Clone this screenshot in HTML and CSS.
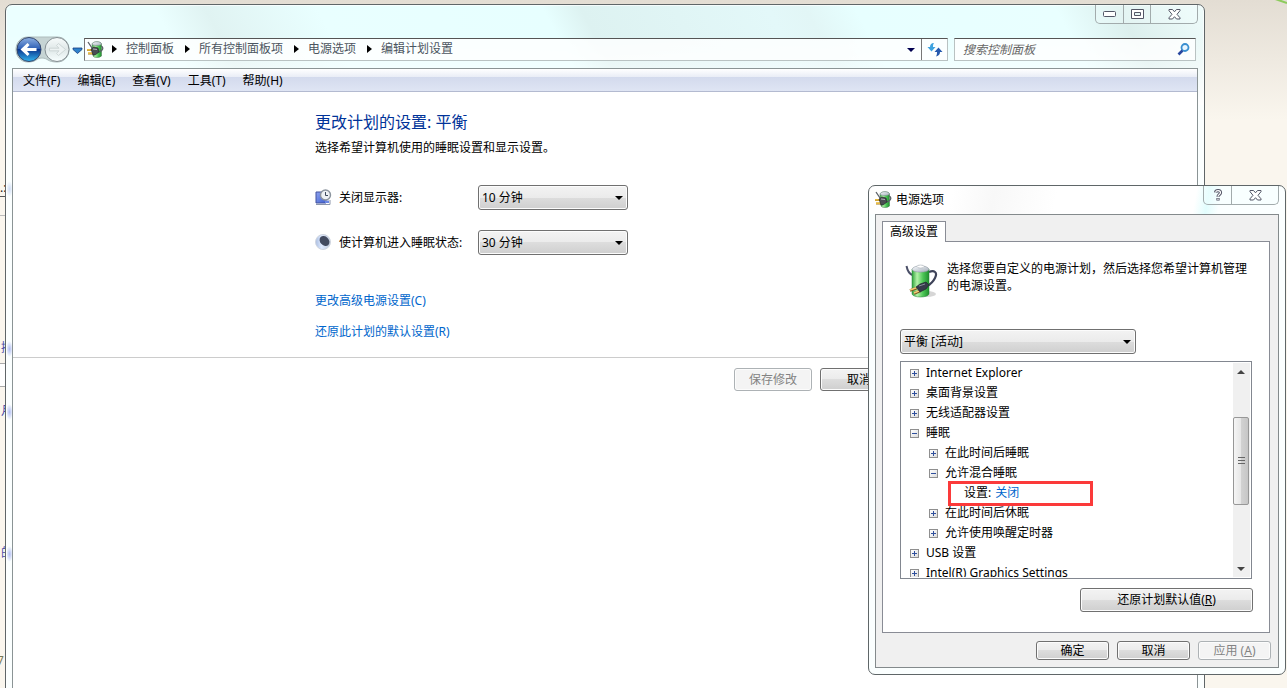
FILE: index.html
```html
<!DOCTYPE html>
<html lang="zh-CN">
<head>
<meta charset="utf-8">
<title>编辑计划设置</title>
<link rel="stylesheet" href="styles.css">
</head>
<body class="desktop">
<svg class="defs" width="0" height="0" aria-hidden="true">
  <defs>
    <linearGradient id="cell" x1="0" x2="1" y1="0" y2="0"><stop offset="0" stop-color="#2fa33c"/><stop offset=".3" stop-color="#b4f2a8"/><stop offset=".65" stop-color="#4cc656"/><stop offset="1" stop-color="#1f8f2e"/></linearGradient>
    <linearGradient id="cap" x1="0" x2="1" y1="0" y2="1"><stop offset="0" stop-color="#fafcff"/><stop offset="1" stop-color="#a3adb8"/></linearGradient>
    <linearGradient id="ball" x1="0" x2="0" y1="0" y2="1"><stop offset="0" stop-color="#8eb0e2"/><stop offset=".48" stop-color="#2c5db4"/><stop offset=".5" stop-color="#0c378f"/><stop offset="1" stop-color="#33b5ef"/></linearGradient>
    <linearGradient id="pale" x1="0" x2="0" y1="0" y2="1"><stop offset="0" stop-color="#f7fbfb"/><stop offset=".5" stop-color="#dfe8e8"/><stop offset="1" stop-color="#f8ffff"/></linearGradient>
    <linearGradient id="screen" x1="0" x2="1" y1="0" y2="1"><stop offset="0" stop-color="#8ea3f0"/><stop offset="1" stop-color="#3f60d0"/></linearGradient>
    <linearGradient id="moon" x1="0" x2="1" y1="0" y2="0"><stop offset="0" stop-color="#a9bde0"/><stop offset=".4" stop-color="#dfeaff"/><stop offset="1" stop-color="#c0cadb"/></linearGradient>
    <symbol id="power" viewBox="0 0 34 36">
      <ellipse cx="22" cy="31" rx="9" ry="3" fill="#777" opacity=".3"/>
      <path d="M1.500 3c1 5 3 8 6 9" fill="none" stroke="#4b5068" stroke-width="2"/>
      <path d="M24 9c5-2 9 0 6 6-2 4-4 6-8 8" fill="none" stroke="#3e4359" stroke-width="2.200"/>
      <path d="M7 6v25c1 4 16 4 17 0V6z" fill="url(#cell)" stroke="#27843a" stroke-width=".5"/>
      <path d="M7 6.500c1-5 16-5 17 0-1 3.500-16 3.500-17 0z" fill="url(#cap)" stroke="#89939c" stroke-width=".5"/>
      <ellipse cx="15.500" cy="3.500" rx="3.500" ry="1.500" fill="#fff" stroke="#9aa3ab" stroke-width=".5"/>
      <path d="M5 27.500l7-2.500M9 30.500l6-2.500" stroke="#7c5420" stroke-width="2.600"/>
      <path d="M5 27l7-2.500M9 30l6-2.500" stroke="#f3cd77" stroke-width="1.400"/>
      <path d="M11 24l4-3 6-2 3 3-3 4-6 3z" fill="#363a4a" stroke="#191c27" stroke-width=".6"/>
      <path d="M14 23l6-2" stroke="#838999"/>
    </symbol>
    <symbol id="power-small" viewBox="0 0 17 17">
      <path d="M5 3c1-3 9-3 9.500 0v12c-2 2-7.500 2-8.500 0z" fill="url(#cell)" stroke="#477350" stroke-width=".5"/>
      <path d="M5 3c1-3 9-3 9.500 0-1 2-8.500 2-9.500 0z" fill="url(#cap)" stroke="#788" stroke-width=".5"/>
      <path d="M1 1l4 6M14 5c3 1 2 5-2 6" fill="none" stroke="#5a6066" stroke-width="1.300"/>
      <path d="M0 9h5M1 12.500h5" stroke="#a07a1c" stroke-width="2"/>
      <path d="M0 8.800h5M1 12.200h5" stroke="#ffd04d" stroke-width="1.200"/>
      <path d="M4 8l3-2 4 1 1 4-4 3H6z" fill="#4a4d52" stroke="#1b1d21" stroke-width=".6"/>
      <path d="M6 8l4 .5" stroke="#b0b4ba"/>
    </symbol>
    <symbol id="x-mark" viewBox="0 0 13 11">
      <path d="M1 .5h3.500l2 2.300 2-2.300H12v1.200L9 5.300l3 3.500V10H8.500l-2-2.300-2 2.300H1V8.800l3-3.500-3-3.600z" fill="#fff" stroke="#535666"/>
    </symbol>
  </defs>
</svg>

<div class="backdrop" aria-hidden="true">
  <span class="rule rule-dark"></span><span class="rule rule-light"></span><span class="strip"></span>
  <span class="bit bit-dots">.:</span><span class="bit bit-a">接</span><span class="bit bit-b">月</span><span class="bit bit-c">的</span><span class="bit bit-d">7</span>
  <svg class="leaf" width="12" height="5" viewBox="0 0 12 5"><path d="M0-1l12 4" stroke="#8ccb5c" stroke-width="2" fill="none"/></svg>
</div>

<main class="window">
  <header class="titlebar">
    <div class="caption">
      <button class="cap" aria-label="最小化"><svg width="13" height="6" viewBox="0 0 13 6"><rect x=".5" y=".5" width="12" height="5" rx="1" fill="#fff" stroke="#535666"/></svg></button>
      <button class="cap" aria-label="最大化"><svg width="13" height="11" viewBox="0 0 13 11"><path d="M.5.5h12v9H.5zM3.500 3.500h6v3h-6z" fill="#fff" stroke="#535666" fill-rule="evenodd"/></svg></button>
      <button class="cap cap-wide" aria-label="关闭"><svg width="13" height="11"><use href="#x-mark"/></svg></button>
    </div>
  </header>
  <nav class="navbar">
    <button class="travel" aria-label="后退和前进">
      <svg width="68" height="28" viewBox="0 0 68 28">
        <path d="M13 1h29c16 0 16 25 0 25-10 0-9-4-15-4s-5 4-14 4C-3 26-3 1 13 1z" fill="#c6d4d4" stroke="#aebcbc"/>
        <circle cx="14" cy="13.500" r="12" fill="url(#ball)" stroke="#34466c"/>
        <path d="M5.500 13.500l7-6.500 2 2-2.500 3h9.500v3H12l2.500 3-2 2z" fill="#fff"/>
        <circle cx="42" cy="13.500" r="12" fill="url(#pale)" stroke="#848e92"/>
        <path d="M50.500 13.500l-7-6-2 2 2.500 2.700h-9.500v2.600H44l-2.500 2.700 2 2z" fill="#edf3f3" stroke="#c7d0d1" stroke-width=".8"/>
        <path d="M58 12h9v1.500L62.500 17.500 58 13.500z" fill="#2e82cc" stroke="#173c80" stroke-width=".8"/>
      </svg>
    </button>
    <div class="address">
      <svg class="address-icon" width="17" height="17"><use href="#power-small"/></svg>
      <ol class="crumbs">
        <li><a href="#">控制面板</a></li><li><a href="#">所有控制面板项</a></li><li><a href="#">电源选项</a></li><li><a href="#">编辑计划设置</a></li>
      </ol>
      <button class="history" aria-label="以前的位置"><span class="tri"></span></button>
      <button class="refresh" aria-label="刷新"><svg width="16" height="15" viewBox="0 0 16 15"><path d="M7 1C4 1 3 3 3 5H.5l4 4.500L8.500 5H6c0-1.500 0-2.500 1-4z" fill="#3da2df"/><path d="M9 14.500c3-.5 4-2.500 4-4.500h2.500l-4-4.500L7.500 10H10c0 2-.2 3-1 4.500z" fill="#2559ae"/></svg></button>
    </div>
    <label class="search">
      <input type="search" placeholder="搜索控制面板" aria-label="搜索控制面板">
      <svg width="13" height="13" viewBox="0 0 13 13"><circle cx="8" cy="4.500" r="3.500" fill="#e8f6ff" stroke="#3a8fd0" stroke-width="1.800"/><path d="M5.500 7.500L1.500 11.500" stroke="#29479f" stroke-width="2.600"/></svg>
    </label>
  </nav>
  <div class="client">
    <div class="menubar"><button>文件(F)</button><button>编辑(E)</button><button>查看(V)</button><button>工具(T)</button><button>帮助(H)</button></div>
    <section class="plan">
      <h1>更改计划的设置: 平衡</h1>
      <p>选择希望计算机使用的睡眠设置和显示设置。</p>
      <div class="fields">
        <svg width="17" height="17" viewBox="0 0 17 17"><path d="M1 3h10v11H1z" fill="url(#screen)" stroke="#43539e"/><path d="M1 15.500h14V11" fill="none" stroke="#8c96ac"/><path d="M10 11.500h4V14h-4z" fill="#6d88e4"/><circle cx="10.500" cy="6" r="5" fill="#eef2f5" stroke="#8b949e" stroke-width="1.400"/><path d="M10.500 3v3.500h2.500" fill="none" stroke="#3d4a5c"/></svg>
        <label for="display">关闭显示器:</label>
        <span class="combo"><select id="display"><option>10 分钟</option></select></span>
        <svg width="17" height="17" viewBox="0 0 17 17"><circle cx="8" cy="8" r="7.500" fill="url(#moon)" stroke="#d0d6e0"/><ellipse cx="9.500" cy="7" rx="5.500" ry="4.300" transform="rotate(45 9.500 7)" fill="#434b60"/></svg>
        <label for="sleep">使计算机进入睡眠状态:</label>
        <span class="combo"><select id="sleep"><option>30 分钟</option></select></span>
      </div>
      <div class="links"><a href="#">更改高级电源设置(C)</a><a href="#">还原此计划的默认设置(R)</a></div>
    </section>
    <footer class="plan-actions"><button class="btn" disabled>保存修改</button><button class="btn">取消</button></footer>
  </div>
</main>

<section class="dialog" role="dialog" aria-labelledby="dialog-title">
  <header class="dialog-title">
    <svg width="17" height="17"><use href="#power-small"/></svg>
    <h2 id="dialog-title">电源选项</h2>
    <div class="caption">
      <button class="cap" aria-label="帮助"><svg width="10" height="12" viewBox="0 0 10 12"><path d="M2.500 3.500C3 1 7.500 1 7.500 3.800 7.500 5.500 5 5.500 5 7.800M5 9v2.500" fill="none" stroke="#535666" stroke-width="3.200"/><path d="M2.500 3.500C3 1 7.500 1 7.500 3.800 7.500 5.500 5 5.500 5 7.500M5 9.500v1.500" fill="none" stroke="#fff" stroke-width="1.200"/></svg></button>
      <button class="cap cap-wide" aria-label="关闭"><svg width="13" height="11"><use href="#x-mark"/></svg></button>
    </div>
  </header>
  <div class="dialog-client">
    <div role="tablist"><button class="tab" role="tab" aria-selected="true">高级设置</button></div>
    <div class="page" role="tabpanel">
      <div class="intro"><svg width="34" height="36"><use href="#power"/></svg><p>选择您要自定义的电源计划，然后选择您希望计算机管理的电源设置。</p></div>
      <span class="combo combo-plan"><select aria-label="电源计划"><option>平衡 [活动]</option></select></span>
      <div class="listbox">
        <ul class="tree">
          <li><button class="knob" aria-label="展开"></button>Internet Explorer</li>
          <li><button class="knob" aria-label="展开"></button>桌面背景设置</li>
          <li><button class="knob" aria-label="展开"></button>无线适配器设置</li>
          <li><button class="knob open" aria-label="折叠"></button>睡眠</li>
          <li class="sub"><button class="knob" aria-label="展开"></button>在此时间后睡眠</li>
          <li class="sub"><button class="knob open" aria-label="折叠"></button>允许混合睡眠</li>
          <li class="leaf-row"><span class="marker"></span>设置: <a href="#">关闭</a></li>
          <li class="sub"><button class="knob" aria-label="展开"></button>在此时间后休眠</li>
          <li class="sub"><button class="knob" aria-label="展开"></button>允许使用唤醒定时器</li>
          <li><button class="knob" aria-label="展开"></button>USB 设置</li>
          <li><button class="knob" aria-label="展开"></button>Intel(R) Graphics Settings</li>
        </ul>
        <div class="scrollbar"><button class="step" aria-label="向上"><span class="tri tri-up"></span></button><div class="track"><div class="thumb"></div></div><button class="step" aria-label="向下"><span class="tri"></span></button></div>
      </div>
      <button class="btn restore">还原计划默认值(<u>R</u>)</button>
    </div>
    <footer class="dialog-actions"><button class="btn">确定</button><button class="btn">取消</button><button class="btn" disabled>应用 (<u>A</u>)</button></footer>
  </div>
</section>
</body>
</html>
```

FILE: styles.css
```css
* { box-sizing: border-box; }
body, h1, h2, p, ul, ol { margin: 0; padding: 0; }
ul, ol { list-style: none; }
button, input, select { font: inherit; color: inherit; }
button { padding: 0; border: 0; background: none; white-space: nowrap; }
svg { display: block; flex: none; }
a { color: #0066cc; text-decoration: none; }
.defs { position: absolute; }

.desktop {
  position: relative;
  height: 100vh;
  overflow: hidden;
  font: 12px/16px "Noto Sans", "Noto Sans CJK SC", sans-serif;
  color: #000;
  background: #faf6ee linear-gradient(#e3ddd3, #faf6ee) 0 0 / 100% 120px no-repeat;
}

/* slivers of the page behind the windows */
.backdrop > * { position: absolute; }
.rule { left: 0; width: 6px; height: 1px; }
.rule-dark { top: 196px; background: #555; }
.rule-light { top: 215px; background: #bbb; }
.strip { left: 0; top: 363px; width: 6px; height: 24px; background: #fff; border: solid #aaa; border-width: 1px 0; }
.bit { left: 1px; color: #4a4aa8; }
.bit-dots { left: 0; top: 180px; color: #222; }
.bit-a { top: 340px; }
.bit-b { top: 403px; }
.bit-c { top: 545px; }
.bit-d { left: -3px; top: 653px; color: #777755; }
.leaf { top: 0; right: 0; }

/* main window */
.window {
  position: absolute;
  inset: 4px 82px -8px 5px;
  display: flex;
  flex-direction: column;
  padding: 0 6px;
  border: 1px solid #5f6668;
  border-radius: 7px 7px 0 0;
  background:
    radial-gradient(ellipse at center, #b0bcf2, transparent 70%) 0 336px / 7px 16px no-repeat,
    radial-gradient(ellipse at center, #b0bcf2, transparent 70%) 0 399px / 7px 16px no-repeat,
    radial-gradient(ellipse at center, #b0bcf2, transparent 70%) 0 541px / 7px 16px no-repeat,
    radial-gradient(ellipse at center, #cfdcf5, transparent 70%) 0 176px / 7px 16px no-repeat,
    linear-gradient(transparent 30%, #fff) 0 0 / 100% 100px no-repeat,
    linear-gradient(62deg, #ebffff 0 16%, #e0f3f2 20%, #e9ffff 29%, #e7ffff 47%, #ddf2f1 50%, #e3f8f9 65%, #e2f6f6 68%, #e7ffff 72%, #e9ffff 88%, #dcefed 93%, #effcfb) 0 0 / 100% 100px no-repeat,
    #fbffff;
  box-shadow: inset 0 0 0 1px #ffffffaa;
}
.titlebar { display: flex; justify-content: flex-end; height: 33px; flex: none; }
.caption { display: flex; height: 19px; border: 1px solid #a2abac; border-top: 0; border-radius: 0 0 5px 5px; background: #f4ffff55; }
.cap { display: flex; align-items: center; justify-content: center; width: 27px; }
.cap + .cap { border-left: 1px solid #a2abac; }
.cap-wide { width: 47px; }
.navbar { display: flex; height: 30px; flex: none; align-items: flex-start; padding: 0 2px 0 3px; }
.travel { width: 69px; height: 23px; display: flex; align-items: center; }
.address { flex: 1; display: flex; align-items: stretch; height: 23px; border: 1px solid #b9c2c2; border-top-color: #555; border-left-color: #777; background: #ffffffcc; }
.address-icon { align-self: center; margin-left: 2px; }
.crumbs { flex: 1; display: flex; align-items: center; gap: 11px; padding: 0 0 2px 8px; color: #4b5560; }
.crumbs li { display: flex; align-items: center; gap: 9px; }
.crumbs li::before { content: ""; border: solid transparent; border-width: 4px 0 4px 5px; border-left-color: #000; }
.crumbs a { color: inherit; }
.tri { border: solid transparent; border-width: 4px 4px 0; border-top-color: currentColor; }
.tri-up { border-width: 0 4px 4px; border-bottom-color: currentColor; }
.history { width: 20px; display: flex; align-items: center; justify-content: center; color: #000050; }
.refresh { width: 26px; display: flex; align-items: center; justify-content: center; border-left: 1px solid #777; }
.search { display: flex; align-items: center; width: 242px; height: 23px; margin-left: 6px; padding: 0 5px 0 8px; border: 1px solid #b9c2c2; border-top-color: #555; background: #ffffffcc; }
.search input { flex: 1; min-width: 0; padding: 0; border: 0; outline: 0; background: none; font-style: italic; }
.search input::placeholder { color: #666; opacity: 1; }

.client { flex: 1; border: 1px solid #8b9495; border-bottom: 0; background: #fff; }
.menubar { display: flex; gap: 17px; height: 23px; padding: 2px 0 0 10px; border-bottom: 1px solid #b3bad0; background: linear-gradient(#fff, #e9edf6 8px, #d3daed 8px, #dfe5f4); }
.plan { padding: 19px 20px 17px 302px; border-bottom: 1px solid #ccc; }
.plan h1 { font-size: 16px; line-height: 22px; font-weight: 400; color: #003399; }
.plan p { margin-top: 7px; }
.fields { display: grid; grid-template-columns: 17px 132px 150px; gap: 20px 7px; align-items: center; margin-top: 29px; }
.links { display: flex; flex-direction: column; align-items: flex-start; gap: 15px; margin-top: 38px; }
.plan-actions { display: flex; gap: 8px; padding: 10px 0 0 721px; }

.btn { width: 78px; height: 23px; border: 1px solid #707070; border-radius: 3px; background: linear-gradient(#f3f3f3, #ebebeb 50%, #dddddd 50%, #cfcfcf); box-shadow: inset 0 0 0 1px #fcfcfc; }
.btn:disabled { color: #838383; border-color: #adb2b5; background: #f4f4f4; }
.combo { position: relative; display: block; }
.combo select { display: block; width: 100%; height: 25px; padding: 0 3px; border: 1px solid #707070; border-radius: 3px; appearance: none; background: linear-gradient(#f3f3f3, #ebebeb 50%, #dddddd 50%, #cfcfcf); box-shadow: inset 0 0 0 1px #fcfcfc; }
.combo::after { content: ""; position: absolute; right: 5px; top: 11px; border: solid transparent; border-width: 4px 4px 0; border-top-color: #000; pointer-events: none; }

/* power options dialog */
.dialog {
  position: absolute;
  top: 185px;
  right: 1px;
  width: 418px;
  padding: 0 6px 6px;
  border: 1px solid #5f6668;
  border-radius: 7px;
  background: linear-gradient(100deg, #fff 0 20%, #f8f8f8 30%, #fff 45% 78%, #e2fdfd 81%, #fbffff 84%) 0 0 / 100% 28px no-repeat, #fbffff;
}
.dialog-title { display: flex; height: 28px; align-items: flex-start; gap: 4px; }
.dialog-title > svg { margin-top: 5px; }
.dialog-title h2 { flex: 1; padding-top: 6px; font-size: 12px; line-height: 16px; font-weight: 400; }
.dialog-client { border: 1px solid #848a8c; padding: 6px 8px 7px 6px; background: #f0f0f0; }
.tab { position: relative; display: block; width: 64px; height: 21px; margin-bottom: -1px; border: 1px solid #898c95; border-bottom: 0; background: #fff; }
.page { padding: 18px 17px 20px; border: 1px solid #898c95; background: #fff; display: flex; flex-direction: column; }
.intro { display: flex; gap: 8px; height: 69px; padding-left: 5px; }
.intro svg { margin-top: 3px; }
.intro p { line-height: 17px; }
.combo-plan { width: 236px; }
.listbox { display: flex; height: 218px; margin-top: 7px; padding: 1px; border: 1px solid #828790; overflow: hidden; }
.tree { flex: 1; overflow: hidden; }
.tree li { display: flex; align-items: center; gap: 7px; height: 20px; padding-left: 8px; white-space: nowrap; }
.tree .sub { padding-left: 27px; }
.tree .leaf-row { position: relative; gap: 4px; padding-left: 62px; }
.marker { position: absolute; left: 46px; top: -2px; width: 145px; height: 25px; border: 3px solid #fb3a3a; }
.knob { width: 9px; height: 9px; border: 1px solid #8f8f8f; background: linear-gradient(#2f4f9c, #2f4f9c) center / 5px 1px no-repeat, linear-gradient(#2f4f9c, #2f4f9c) center / 1px 5px no-repeat, linear-gradient(135deg, #fff, #ddd); }
.knob.open { background: linear-gradient(#2f4f9c, #2f4f9c) center / 5px 1px no-repeat, linear-gradient(135deg, #fff, #ddd); }
.scrollbar { display: flex; flex-direction: column; width: 17px; padding-right: 1px; background: #f0f0f0; color: #444; }
.step { display: flex; align-items: center; justify-content: center; height: 17px; }
.track { flex: 1; padding-top: 37px; }
.thumb { height: 88px; border: 1px solid #979797; border-radius: 2px; background: repeating-linear-gradient(#666 0 1px, transparent 1px 3px) center / 7px 9px no-repeat, linear-gradient(90deg, #f5f5f5, #e6e6e6 50%, #d2d2d2 50%, #c6c6c6); }
.restore { align-self: flex-end; width: 173px; height: 24px; margin-top: 9px; margin-right: -1px; }
.dialog-actions { display: flex; justify-content: flex-end; gap: 8px; margin: 8px -1px 0 0; }
.dialog-actions .btn { width: 73px; height: 19px; line-height: 16px; }
```
